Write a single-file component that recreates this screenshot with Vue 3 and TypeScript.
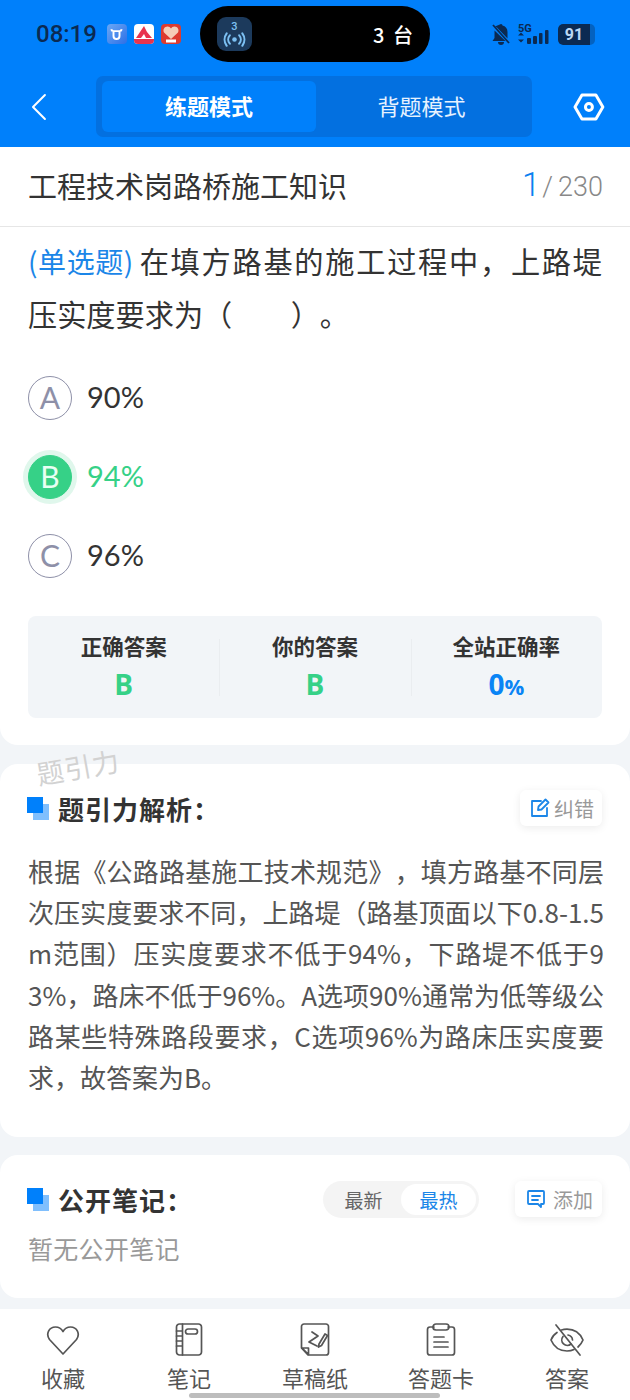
<template>
  <div class="page">
    <header class="top">
      <div class="status">
        <div class="status-left">
          <span class="time">08:19</span>
          <span class="app-icon app-icon--blue">
            <svg viewBox="0 0 20 20" width="15" height="15" fill="none" stroke="#fff" stroke-width="2.6"><path d="M3 3c.5 2 1.500 2.500 3 2.500h8c1.500 0 2.500-.5 3-2.500M6 5.500V12a4 4 0 0 0 8 0V5.500" /></svg>
          </span>
          <span class="app-icon app-icon--white">
            <svg viewBox="0 0 20 20" width="20" height="20"><path d="M2 14 10 2l3 6 5 6h-6l-2-4-3 4z" fill="#e8344e" /><rect y="15" width="20" height="5" fill="#e8344e" /></svg>
          </span>
          <span class="app-icon app-icon--red">
            <svg viewBox="0 0 20 20" width="20" height="20"><path d="M10 15 3 8.500C1.500 5.500 3.500 2.500 6.500 2.500c1.500 0 2.800.7 3.500 2 .7-1.300 2-2 3.500-2 3 0 5 3 3.500 6z" fill="#f5cdb8" /><rect x="5" y="15.500" width="10" height="3" fill="#fff" /></svg>
          </span>
        </div>
        <div class="island">
          <span class="island-icon">
            <span class="island-num">3</span>
            <svg viewBox="0 0 24 14" width="25" height="15" fill="none" stroke="#7cc0f2" stroke-width="2" stroke-linecap="round">
              <circle cx="12" cy="7" r="2.200" fill="#7cc0f2" stroke="none" />
              <path d="M7.500 3a6 6 0 0 0 0 8M16.500 3a6 6 0 0 1 0 8M4.500 1a10 10 0 0 0 0 12M19.500 1a10 10 0 0 1 0 12" />
            </svg>
          </span>
          <span class="island-text">3 台</span>
        </div>
        <div class="status-right">
          <svg viewBox="0 0 20 22" width="20" height="22" fill="#0b2a52">
            <path d="M10 1a1.500 1.500 0 0 1 1.500 1.500c3 .8 5 3 5 6.500v6.500L6 4.500 4 3.500 10 1zM3.500 7.500 14.500 18H1.500l2-3z" />
            <path d="M7 19h6a3 3 0 0 1-6 0z" />
            <path d="M2 2 18 20" stroke="#0b2a52" stroke-width="1.800" />
          </svg>
          <div class="signal">
            <span class="signal-5g">5G</span>
            <svg viewBox="0 0 32 15" width="32" height="15" fill="#0b2a52">
              <path d="M0 5.500 3 2.500l3 3zM0 9.500l3 3 3-3z" />
              <rect x="9" y="8" width="4" height="6" rx="1" />
              <rect x="15" y="6" width="4" height="8" rx="1" />
              <rect x="21" y="3" width="3.500" height="11" rx="1" />
              <rect x="27" y="0" width="3.500" height="14" rx="1" />
            </svg>
          </div>
          <div class="battery"><span class="battery-fill">91</span></div>
        </div>
      </div>
      <div class="nav">
        <svg class="back" viewBox="0 0 18 28" width="18" height="28" fill="none" stroke="#fff" stroke-width="2" stroke-linecap="round" stroke-linejoin="round"><path d="M15 2 3 14l12 12" /></svg>
        <div class="modes">
          <span class="mode mode--active">练题模式</span>
          <span class="mode">背题模式</span>
        </div>
        <svg class="gear" viewBox="0 0 32 28" width="32" height="28" fill="none" stroke="#fff" stroke-width="3" stroke-linejoin="round">
          <path d="M9 2h14l7 12-7 12H9L2 14z" />
          <circle cx="16" cy="14" r="3.500" />
        </svg>
      </div>
    </header>

    <div class="title-bar">
      <span class="title">工程技术岗路桥施工知识</span>
      <span class="progress"><b>1</b><i>/</i>230</span>
    </div>

    <section class="card card--question">
      <p class="question"><span class="qtype">(单选题)</span>在填方路基的施工过程中，上路堤压实度要求为（　　）。</p>
      <div class="options">
        <div v-for="opt in options" :key="opt.key" class="option" :class="{ 'option--right': opt.right }">
          <span class="option-mark">{{ opt.key }}</span>
          <span class="option-text">{{ opt.text }}</span>
        </div>
      </div>
      <div class="summary">
        <div v-for="s in summary" :key="s.label" class="summary-item">
          <span class="summary-label">{{ s.label }}</span>
          <span class="summary-value" :class="{ 'summary-value--blue': s.blue }">{{ s.value }}<small v-if="s.blue">%</small></span>
        </div>
      </div>
    </section>

    <section class="card card--analysis">
      <span class="watermark">题引力</span>
      <div class="card-head">
        <h2 class="heading"><span class="heading-mark"></span>题引力解析：</h2>
        <span class="chip">
          <svg viewBox="0 0 20 20" width="20" height="20" fill="none" stroke="#1b86e8" stroke-width="1.800" stroke-linecap="round" stroke-linejoin="round">
            <path d="M11 3H2v15h15v-8" />
            <path d="M8 12l.5-3.500L15.500 1.500l3 3-7 7z" />
          </svg>
          纠错
        </span>
      </div>
      <p class="analysis">根据《公路路基施工技术规范》，填方路基不同层次压实度要求不同，上路堤（路基顶面以下0.8-1.5m范围）压实度要求不低于94%，下路堤不低于93%，路床不低于96%。A选项90%通常为低等级公路某些特殊路段要求，C选项96%为路床压实度要求，故答案为B。</p>
    </section>

    <section class="card card--notes">
      <div class="card-head">
        <h2 class="heading"><span class="heading-mark"></span>公开笔记：</h2>
        <div class="notes-tools">
          <div class="sort">
            <span class="sort-item">最新</span>
            <span class="sort-item sort-item--active">最热</span>
          </div>
          <span class="chip chip--add">
            <svg viewBox="0 0 20 20" width="20" height="20" fill="none" stroke="#1b86e8" stroke-width="1.800" stroke-linecap="round" stroke-linejoin="round">
              <path d="M3 2h14a1 1 0 0 1 1 1v11a1 1 0 0 1-1 1h-2v3l-3-3H3a1 1 0 0 1-1-1V3a1 1 0 0 1 1-1z" />
              <path d="M6 7h8M6 11h6" />
            </svg>
            添加
          </span>
        </div>
      </div>
      <p class="empty">暂无公开笔记</p>
    </section>

    <nav class="tabs">
      <div v-for="tab in tabs" :key="tab.label" class="tab">
        <svg viewBox="0 0 34 34" width="34" height="34" fill="none" stroke="#555" stroke-width="1.700" stroke-linecap="round" stroke-linejoin="round">
          <path v-for="d in tab.paths" :key="d" :d="d" />
        </svg>
        <span>{{ tab.label }}</span>
      </div>
      <span class="home-bar"></span>
    </nav>
  </div>
</template>

<script setup lang="ts">
const options = [
  { key: 'A', text: '90%', right: false },
  { key: 'B', text: '94%', right: true },
  { key: 'C', text: '96%', right: false },
];

const summary = [
  { label: '正确答案', value: 'B', blue: false },
  { label: '你的答案', value: 'B', blue: false },
  { label: '全站正确率', value: '0', blue: true },
];

const tabs = [
  {
    label: '收藏',
    paths: ['M17 31 3.500 16.500C-.5 11 3 4 9.500 4c3.200 0 5.800 1.600 7.500 4.500C18.700 5.600 21.300 4 24.500 4c6.500 0 10 7 6 12.500z'],
  },
  {
    label: '笔记',
    paths: [
      'M7.500 1h19a3 3 0 0 1 3 3v25a3 3 0 0 1-3 3h-19a3 3 0 0 1-3-3V4a3 3 0 0 1 3-3z',
      'M10.500 1v31M4.500 8h6M4.500 13h6M4.500 18h6M4.500 23h6',
      'M16 6h7a1.500 1.500 0 0 1 0 5h-7a1.500 1.500 0 0 1 0-5z',
    ],
  },
  {
    label: '草稿纸',
    paths: [
      'M10 32h18a2.500 2.500 0 0 0 2.500-2.500V3.500A2.500 2.500 0 0 0 28 1H6a2.500 2.500 0 0 0-2.500 2.500V25z',
      'M4 25h6.500v6.500z',
      'M14 9l6 4-9 6 8 4',
      'M21 21l6-10 2.500 1.500-6 10-3 1.500z',
    ],
  },
  {
    label: '答题卡',
    paths: [
      'M10 4H6a2.500 2.500 0 0 0-2.500 2.500v23A2.500 2.500 0 0 0 6 32h22a2.500 2.500 0 0 0 2.500-2.500v-23A2.500 2.500 0 0 0 28 4h-4',
      'M12 1h10a1.500 1.500 0 0 1 0 6H12a1.500 1.500 0 0 1 0-6z',
      'M10 14h10M10 19h14M10 24h14',
    ],
  },
  {
    label: '答案',
    paths: [
      'M7 9.500C4 11.500 2 14 1 17c3 7 9 11 16 11 2.500 0 5-.5 7-1.500',
      'M11.500 7c1.800-.6 3.500-.8 5.500-.8 7 0 13 4 16 10.800-1 2.500-2.700 5-5 7',
      'M13 13.500A5.500 5.500 0 0 0 21 21M22.500 17A5.500 5.500 0 0 0 18 12',
      'M6 2l24 30',
    ],
  },
];
</script>

<style>
html,
body {
  margin: 0;
  background: #f2f5f8;
}
</style>

<style scoped>
.page {
  width: 630px;
  height: 1400px;
  overflow: hidden;
  background: #f2f5f8;
  font-family: "Noto Sans CJK SC", "Noto Sans", sans-serif;
  color: #333;
  position: relative;
  text-spacing-trim: space-all;
}

p,
h2 {
  margin: 0;
}

.top {
  background: #0080fb;
  height: 147px;
}

.status {
  height: 76px;
  display: flex;
  align-items: flex-start;
  justify-content: space-between;
  position: relative;
}

.status-left {
  display: flex;
  align-items: center;
  gap: 7px;
  padding: 21px 0 0 36px;
}

.time {
  font-family: Roboto, "Noto Sans", sans-serif;
  font-size: 24px;
  font-weight: 500;
  line-height: 26px;
  color: #0b2a52;
  margin-right: 3px;
}

.app-icon {
  width: 20px;
  height: 20px;
  border-radius: 4px;
  display: flex;
  align-items: center;
  justify-content: center;
  overflow: hidden;
}

.app-icon--blue {
  background: linear-gradient(135deg, #6aa8f5, #2c6fe6);
}

.app-icon--white {
  background: #fff;
}

.app-icon--red {
  background: #dd3b30;
}

.island {
  position: absolute;
  left: 200px;
  top: 6px;
  width: 230px;
  height: 56px;
  border-radius: 28px;
  background: #000;
  display: flex;
  align-items: center;
  justify-content: space-between;
  padding: 0 15px 0 17px;
  box-sizing: border-box;
  color: #fff;
}

.island-icon {
  width: 35px;
  height: 34px;
  border-radius: 9px;
  background: #1c3a5c;
  display: flex;
  flex-direction: column;
  align-items: center;
  justify-content: center;
  color: #7cc0f2;
}

.island-num {
  font-size: 11px;
  line-height: 10px;
  font-family: Roboto, sans-serif;
  font-weight: 500;
}

.island-text {
  font-size: 20px;
  font-weight: 500;
  letter-spacing: 2px;
}

.status-right {
  display: flex;
  align-items: center;
  gap: 7px;
  padding: 23px 35px 0 0;
}

.signal {
  position: relative;
  width: 33px;
  height: 21px;
  display: flex;
  align-items: flex-end;
}

.signal-5g {
  position: absolute;
  left: 0;
  top: -1px;
  font-family: Roboto, sans-serif;
  font-size: 11px;
  line-height: 11px;
  font-weight: 700;
  color: #0b2a52;
}

.battery {
  width: 37px;
  height: 21px;
  border-radius: 5px;
  background: rgba(11, 42, 82, 0.35);
  overflow: hidden;
}

.battery-fill {
  display: block;
  width: 32px;
  height: 21px;
  border-radius: 5px 0 0 5px;
  background: #0b2a52;
  color: #bcd8f5;
  font-family: Roboto, sans-serif;
  font-size: 16px;
  font-weight: 700;
  line-height: 21px;
  text-align: center;
}

.nav {
  height: 61px;
  display: flex;
  align-items: center;
  padding: 0 25px 0 30px;
}

.modes {
  width: 438px;
  height: 61px;
  box-sizing: border-box;
  padding: 5px 5px 5px 6px;
  background: #0370e0;
  border-radius: 7px;
  display: grid;
  grid-template-columns: 214px 1fr;
  margin-left: 48px;
}

.mode {
  display: flex;
  align-items: center;
  justify-content: center;
  color: #e6f2ff;
  font-size: 22px;
  padding-bottom: 3px;
  box-sizing: border-box;
}

.mode--active {
  background: #0080fb;
  border-radius: 6px;
  font-weight: 700;
  color: #fff;
}

.gear {
  margin-left: 41px;
}

.title-bar {
  height: 80px;
  box-sizing: border-box;
  background: #fff;
  border-bottom: 1px solid #e6e6e6;
  display: flex;
  align-items: center;
  justify-content: space-between;
  padding: 0 27px 4px 28px;
}

.title {
  font-size: 29px;
  color: #333;
}

.progress {
  font-family: Roboto, sans-serif;
  font-size: 27px;
  font-weight: 300;
  color: #888;
}

.progress b {
  font-weight: 300;
  font-size: 33px;
  color: #0a80f0;
}

.progress i {
  font-style: normal;
  margin: 0 5px 0 2px;
}

.card {
  background: #fff;
  border-radius: 18px;
  box-sizing: border-box;
  padding-left: 28px;
  padding-right: 28px;
}

.card--question {
  height: 518px;
  border-radius: 0 0 18px 18px;
  padding-top: 7px;
}

.question {
  font-size: 29.200px;
  line-height: 53px;
  color: #333;
  text-align: justify;
}

.qtype {
  display: inline-block;
  font-size: 28px;
  line-height: 1;
  color: #1b86e8;
  letter-spacing: 0.6px;
  margin-right: 4px;
}

.options {
  margin-top: 36px;
  display: grid;
  gap: 35px;
}

.option {
  display: flex;
  align-items: center;
  gap: 15px;
  height: 44px;
}

.option-mark {
  width: 44px;
  height: 44px;
  box-sizing: border-box;
  border: 1.500px solid #8e90a8;
  border-radius: 50%;
  display: flex;
  align-items: center;
  justify-content: center;
  padding-bottom: 3px;
  font-family: Lato, sans-serif;
  font-size: 30px;
  color: #8e90a8;
}

.option-text {
  font-family: Lato, sans-serif;
  font-size: 29px;
  color: #333;
  font-weight: 400;
  margin-top: -3px;
}

.option--right .option-mark {
  background: #36d187;
  border-color: #36d187;
  color: #e8fff3;
  box-shadow: 0 0 0 5px #e0f7ec;
}

.option--right .option-text {
  color: #36d187;
}

.summary {
  margin-top: 38px;
  height: 102px;
  background: #f2f5f8;
  border-radius: 8px;
  display: grid;
  grid-template-columns: repeat(3, 1fr);
  align-items: center;
}

.summary-item {
  display: flex;
  flex-direction: column;
  align-items: center;
  gap: 7px;
  padding-bottom: 4px;
  position: relative;
}

.summary-item + .summary-item::before {
  content: "";
  position: absolute;
  left: 0;
  top: 8px;
  bottom: 8px;
  border-left: 1px solid #eaedf0;
}

.summary-label {
  font-size: 21.500px;
  font-weight: 700;
  line-height: 30px;
  color: #333;
}

.summary-value {
  font-family: "Open Sans", sans-serif;
  font-size: 28px;
  font-weight: 700;
  line-height: 32px;
  height: 32px;
  color: #36d187;
}

.summary-value--blue {
  color: #0a84f5;
}

.summary-value small {
  font-size: 22px;
  line-height: 1;
}

.card--analysis {
  height: 373px;
  margin-top: 19px;
  padding-top: 26px;
  position: relative;
}

.watermark {
  position: absolute;
  left: 36px;
  top: -17px;
  font-size: 27px;
  color: #d2d2d2;
  transform: rotate(-10deg);
  letter-spacing: 1px;
}

.card-head {
  display: flex;
  align-items: center;
  justify-content: space-between;
  height: 36px;
}

.heading {
  display: flex;
  align-items: center;
  font-size: 26px;
  font-weight: 700;
  color: #333;
  letter-spacing: 1px;
  margin-left: -1px;
}

.heading-mark {
  width: 22px;
  height: 23px;
  margin-right: 9px;
  background: linear-gradient(#0080fb, #0080fb) 0 0 / 16px 16px no-repeat,
    linear-gradient(#80bffd, #80bffd) 6px 7px / 16px 16px no-repeat;
}

.chip {
  display: flex;
  align-items: center;
  gap: 4px;
  height: 36px;
  padding: 0 8px 0 10px;
  box-sizing: border-box;
  border-radius: 6px;
  background: #fff;
  box-shadow: 0 2px 8px rgba(0, 0, 0, 0.08);
  font-size: 20px;
  color: #999;
}

.chip--add {
  padding-left: 11px;
  padding-right: 9px;
  gap: 7px;
}

.analysis {
  margin-top: 24px;
  font-size: 26px;
  line-height: 41.2px;
  color: #555;
  word-break: break-all;
  text-align: justify;
  width: 576px;
}

.card--notes {
  height: 143px;
  margin-top: 18px;
  padding-top: 26px;
}

.notes-tools {
  display: flex;
  align-items: center;
  gap: 36px;
}

.sort {
  display: flex;
  align-items: center;
  width: 156px;
  height: 37px;
  box-sizing: border-box;
  padding: 3px;
  background: #f4f4f4;
  border-radius: 19px;
}

.sort-item {
  flex: 1;
  font-size: 19px;
  color: #666;
  text-align: center;
  line-height: 31px;
}

.sort-item--active {
  background: #fff;
  border-radius: 16px;
  color: #1b86e8;
}

.empty {
  margin-top: 13px;
  font-size: 25px;
  letter-spacing: 0.3px;
  color: #999;
}

.tabs {
  position: absolute;
  left: 0;
  right: 0;
  bottom: 0;
  height: 91px;
  background: #fff;
  display: grid;
  grid-template-columns: repeat(5, 126px);
  padding-top: 14px;
  box-sizing: border-box;
}

.tab {
  display: flex;
  flex-direction: column;
  align-items: center;
  font-size: 22px;
  color: #555;
  line-height: 30px;
  gap: 5px;
}

.home-bar {
  position: absolute;
  left: 189px;
  bottom: 2px;
  width: 251px;
  height: 5px;
  border-radius: 3px;
  background: #bdbdbd;
}
</style>
